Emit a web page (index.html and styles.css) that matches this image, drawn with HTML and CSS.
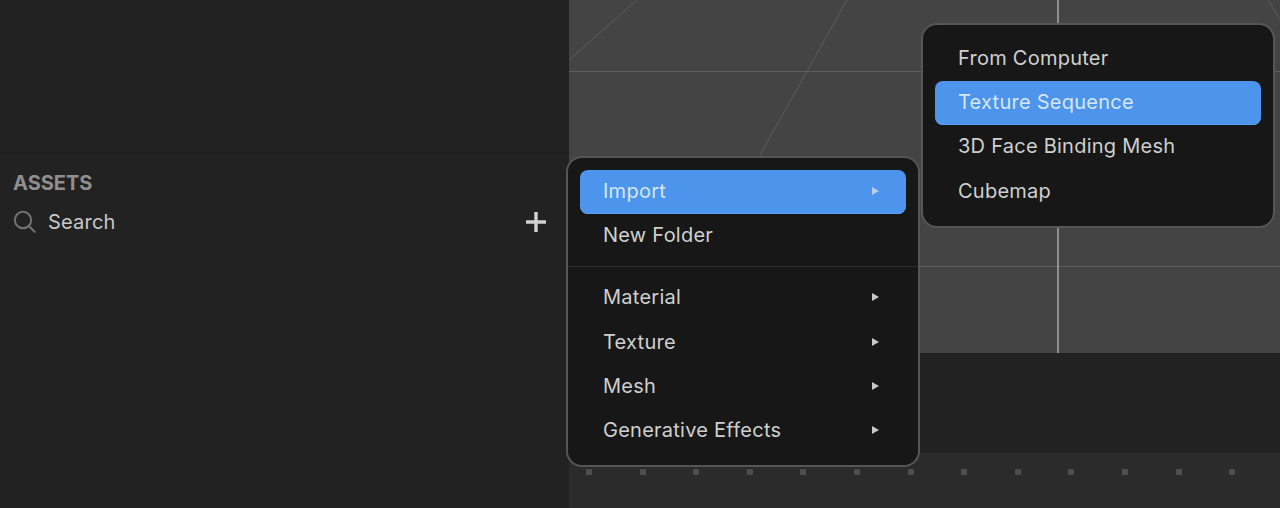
FILE: index.html
```html
<!DOCTYPE html>
<html lang="en">
<head>
<meta charset="utf-8">
<title>Assets</title>
<link rel="stylesheet" href="styles.css">
</head>
<body>
<div class="app">
  <aside class="side">
    <div class="side-top"></div>
    <section class="assets">
      <h2 class="assets-title">ASSETS</h2>
      <div class="search">
        <svg class="search-icon" width="24" height="24" viewBox="0 0 24 24" fill="none"><circle cx="10" cy="10" r="8.2" stroke="#737373" stroke-width="2"/><path d="M16 16.2 21.6 21.8" stroke="#737373" stroke-width="2" stroke-linecap="round"/></svg>
        <span class="search-label">Search</span>
        <svg class="plus" width="22" height="22" viewBox="0 0 22 22" fill="none"><path d="M11 1v20M1 11h20" stroke="#d2d2d2" stroke-width="3.4"/></svg>
      </div>
    </section>
  </aside>
  <main class="stage">
    <div class="viewport">
      <svg class="grid" width="711" height="353" viewBox="0 0 711 353" fill="none">
        <path d="M0 60 68 0M278 0 191 155M699 0 711 20" stroke="#5c5c5c" stroke-width="1"/>
        <path d="M0 71.5H711M0 266.5H711" stroke="#5e5e5e" stroke-width="1"/>
        <path d="M489 0V353" stroke="#a8a8a8" stroke-width="1.5"/>
      </svg>
    </div>
    <div class="band"></div>
    <div class="timeline">
      <i class="dot"></i><i class="dot"></i><i class="dot"></i><i class="dot"></i><i class="dot"></i><i class="dot"></i><i class="dot"></i><i class="dot"></i><i class="dot"></i><i class="dot"></i><i class="dot"></i><i class="dot"></i><i class="dot"></i>
    </div>
  </main>
</div>

<nav class="menu menu-main">
  <div class="item active"><span>Import</span><i class="arrow"></i></div>
  <div class="item"><span>New Folder</span></div>
  <div class="sep"></div>
  <div class="item"><span>Material</span><i class="arrow"></i></div>
  <div class="item"><span>Texture</span><i class="arrow"></i></div>
  <div class="item"><span>Mesh</span><i class="arrow"></i></div>
  <div class="item"><span>Generative Effects</span><i class="arrow"></i></div>
</nav>

<nav class="menu menu-sub">
  <div class="item"><span>From Computer</span></div>
  <div class="item active"><span>Texture Sequence</span></div>
  <div class="item"><span>3D Face Binding Mesh</span></div>
  <div class="item"><span>Cubemap</span></div>
</nav>
</body>
</html>
```

FILE: styles.css
```css
* { box-sizing: border-box; }
html, body { margin: 0; height: 100%; }
body {
  background: #222;
  color: #cfcfcf;
  font-family: Inter, "Liberation Sans", sans-serif;
  overflow: hidden;
}
.app { display: flex; width: 1280px; height: 508px; }

.side { width: 569px; flex: none; background: #222; display: flex; flex-direction: column; }
.side-top { height: 154px; flex: none; border-bottom: 2px solid #1d1d1d; }
.assets { padding: 17px 22px 0 13px; }
.assets-title { margin: 0; font-size: 20px; line-height: 24px; font-weight: 700; color: #8f8f8f; }
.search { display: flex; align-items: center; margin-top: 13px; height: 28px; }
.search-icon { flex: none; }
.search-label { margin-left: 11px; font-size: 20px; line-height: 28px; letter-spacing: 0.2px; color: #c8c8c8; flex: 1; }
.plus { flex: none; }

.stage { flex: 1; display: flex; flex-direction: column; min-width: 0; }
.viewport { height: 353px; flex: none; background: #444; position: relative; overflow: hidden; }
.grid { position: absolute; left: 0; top: 0; display: block; }
.band { height: 100px; flex: none; background: #222; }
.timeline { flex: 1; background: #2b2b2b; display: flex; gap: 47.6px; padding: 15.5px 0 0 17px; align-items: flex-start; }
.dot { width: 6px; height: 6px; flex: none; background: #4e4e4e; border-radius: 1px; }

.menu {
  position: absolute;
  width: 354px;
  padding: 12px;
  background: #171717;
  border: 2px solid #565656;
  border-radius: 16px;
}
.menu-main { left: 566px; top: 156px; }
.menu-sub { left: 921px; top: 23px; }
.item {
  height: 44.2px;
  display: flex;
  align-items: center;
  justify-content: space-between;
  padding: 0 27px 2px 23px;
  font-size: 20px;
  letter-spacing: 0.25px;
  color: #cfcfcf;
  border-radius: 8px;
}
.item.active { background: #4c94ec; color: #d6e7fc; box-shadow: inset 0 -1px 0 #5aa0f2; }
.sep { height: 1px; margin: 8px -12px 9px; background: #2e2e2e; }
.arrow { width: 0; height: 0; border-left: 7px solid #c6c6c6; border-top: 4.5px solid transparent; border-bottom: 4.5px solid transparent; }
.item.active .arrow { border-left-color: #b9cfe9; }
```
